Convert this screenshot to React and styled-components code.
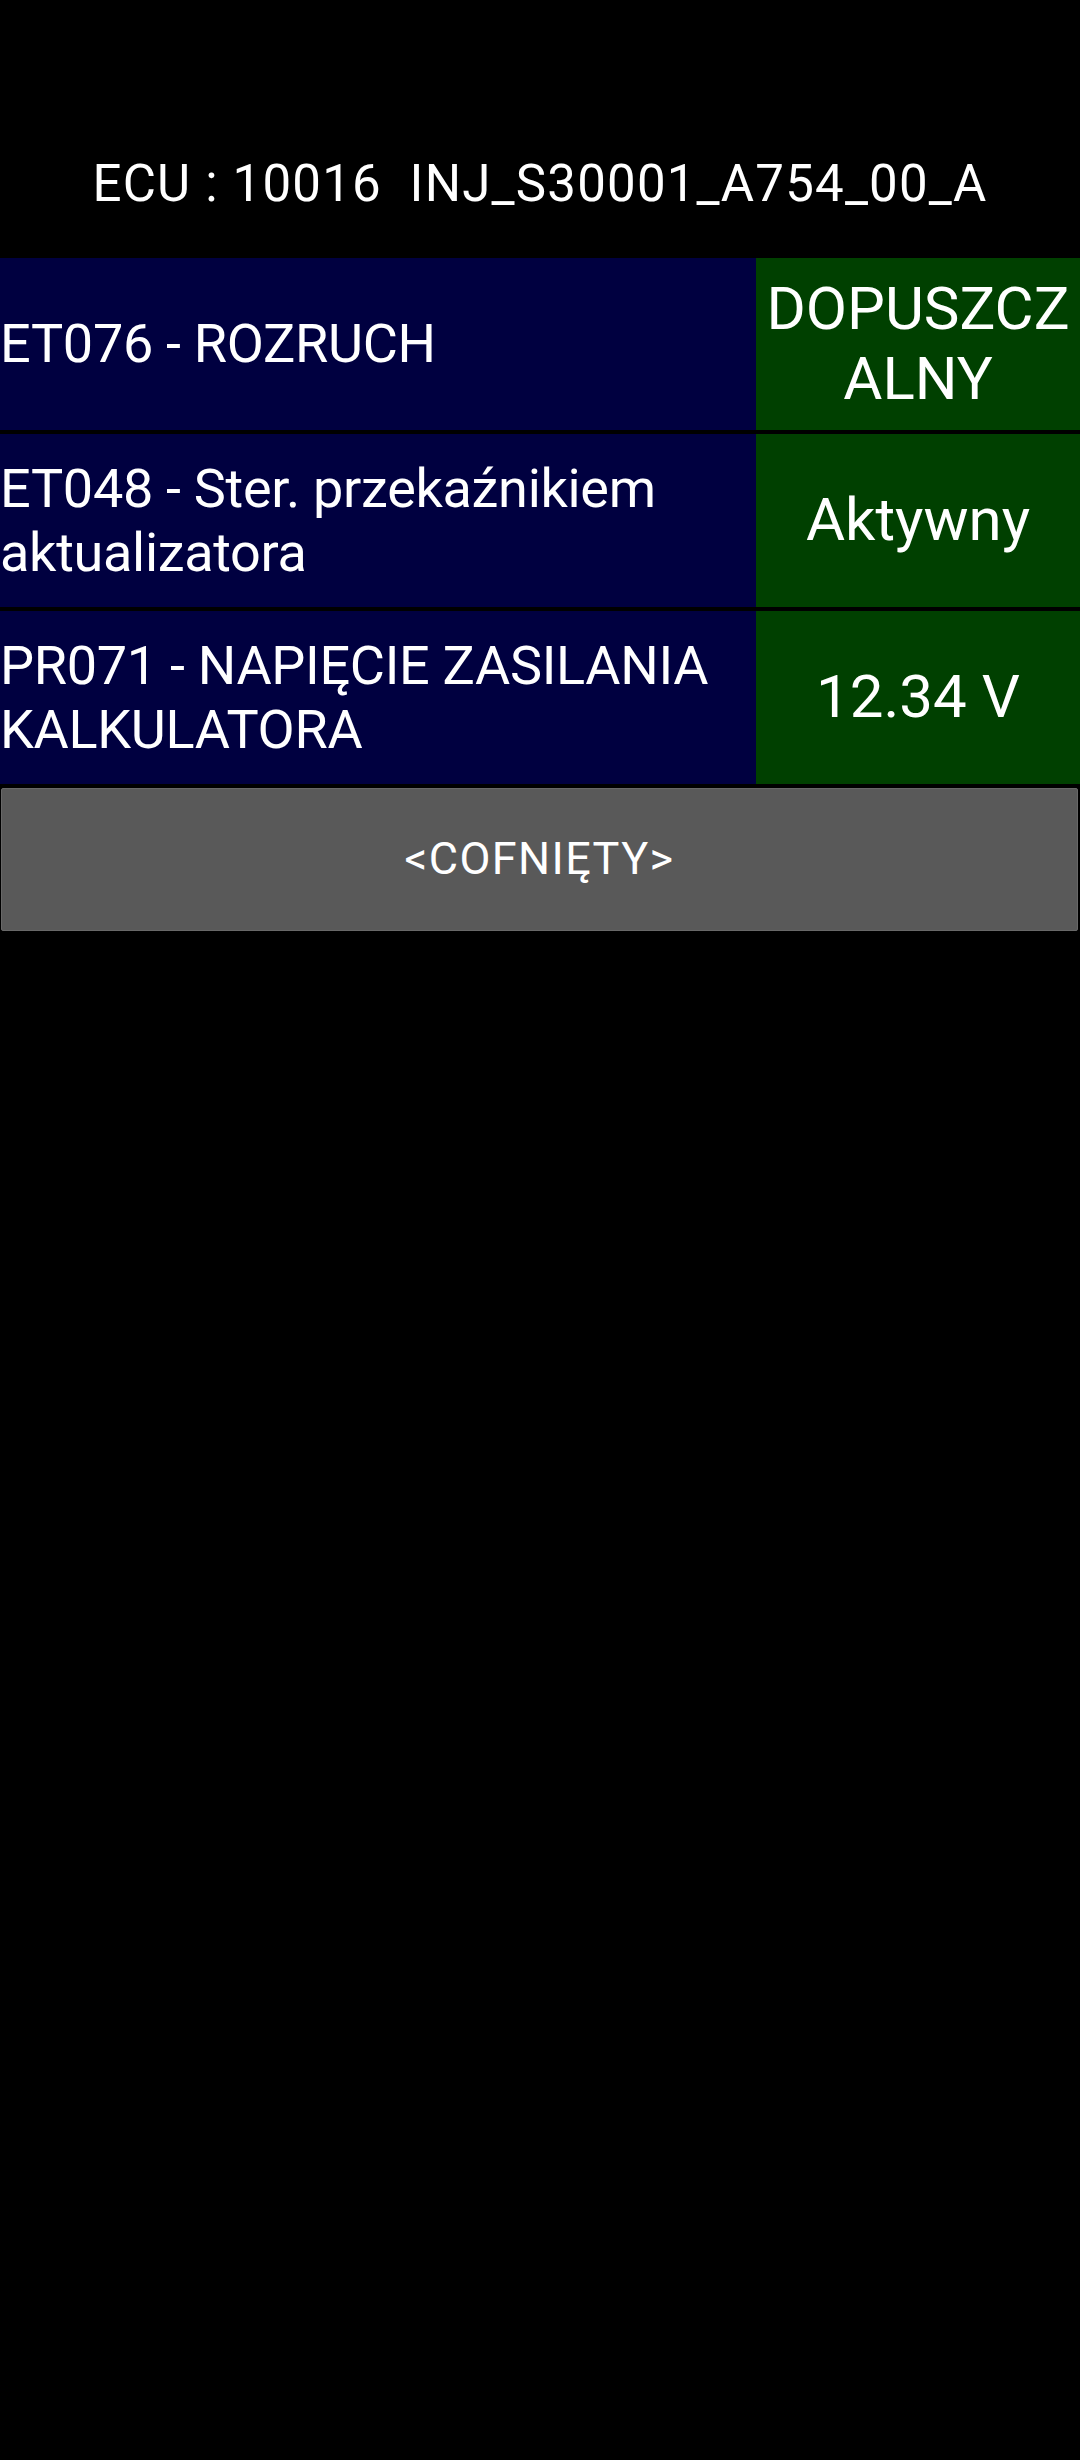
import React from 'react';
import styled, { createGlobalStyle } from 'styled-components';

const rows = [
	{ label: 'ET076 - ROZRUCH', value: 'DOPUSZCZALNY', height: 172 },
	{ label: 'ET048 - Ster. przekaźnikiem aktualizatora', value: 'Aktywny', height: 173 },
	{ label: 'PR071 - NAPIĘCIE ZASILANIA KALKULATORA', value: '12.34 V', height: 173 },
];

const App = () => {
	return (
		<Screen>
			<GlobalStyle />
			<Header>{'ECU : 10016  INJ_S30001_A754_00_A'}</Header>

			<List>
				{rows.map((row) => (
					<Row key={row.label} $height={row.height}>
						<Label>{row.label}</Label>
						<Value>{row.value}</Value>
					</Row>
				))}
			</List>

			<BackButton type="button">{'<COFNIĘTY>'}</BackButton>
		</Screen>
	);
};

const GlobalStyle = createGlobalStyle`
	html, body {
		margin: 0;
		padding: 0;
		background: #000;
	}
	body {
		font-family: Roboto, "Noto Sans", sans-serif;
		color: #fff;
	}
`;

const Screen = styled.div`
	width: 1080px;
	min-height: 2460px;
	background: #000;
	display: flex;
	flex-direction: column;
`;

const Header = styled.div`
	box-sizing: border-box;
	height: 258px;
	padding-top: 154px;
	font-size: 51px;
	line-height: 1.172;
	letter-spacing: 1.2px;
	text-align: center;
	white-space: pre;
`;

const List = styled.div`
	display: flex;
	flex-direction: column;
	gap: 4px;
`;

const Row = styled.div`
	display: flex;
	height: ${(p) => p.$height}px;
`;

const Label = styled.div`
	width: 756px;
	background: #000040;
	display: flex;
	align-items: center;
	font-size: 54px;
	line-height: 1.172;
	letter-spacing: -0.3px;
`;

const Value = styled.div`
	flex: 1;
	background: #004000;
	display: flex;
	align-items: center;
	justify-content: center;
	text-align: center;
	font-size: 60px;
	line-height: 1.172;
	padding: 0 6px;
	word-break: break-all;
`;

const BackButton = styled.button`
	box-sizing: border-box;
	margin: 4px 2px 0 1px;
	height: 143px;
	background: #595959;
	border: 1px solid #686868;
	border-radius: 2px;
	box-shadow: 0 1px 1px rgba(0, 0, 0, 0.5);
	color: #fff;
	font-family: Roboto, "Noto Sans", sans-serif;
	font-size: 45px;
	line-height: 1.172;
	letter-spacing: 1.4px;
	padding: 0;
`;

export default App;
